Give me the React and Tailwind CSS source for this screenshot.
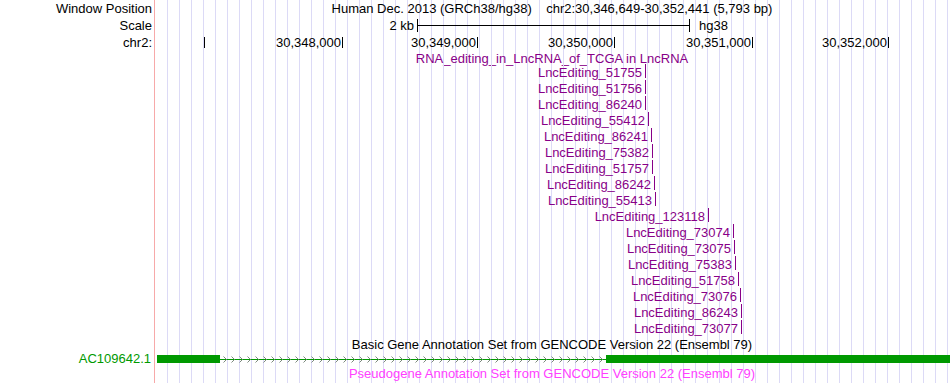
import React from 'react';

const GRID =
  'bg-[linear-gradient(to_right,transparent_11px,#dcdaf6_11px)] bg-[length:12px_100%]';

const rulerTicks = [
  { x: 204, label: '' },
  { x: 342, label: '30,348,000' },
  { x: 477, label: '30,349,000' },
  { x: 614, label: '30,350,000' },
  { x: 752, label: '30,351,000' },
  { x: 888, label: '30,352,000' },
];

const features = [
  ['LncEditing_51755', 645],
  ['LncEditing_51756', 645],
  ['LncEditing_86240', 645],
  ['LncEditing_55412', 648],
  ['LncEditing_86241', 651],
  ['LncEditing_75382', 652],
  ['LncEditing_51757', 652],
  ['LncEditing_86242', 654],
  ['LncEditing_55413', 655],
  ['LncEditing_123118', 708],
  ['LncEditing_73074', 733],
  ['LncEditing_73075', 734],
  ['LncEditing_75383', 735],
  ['LncEditing_51758', 738],
  ['LncEditing_73076', 740],
  ['LncEditing_86243', 741],
  ['LncEditing_73077', 741],
];

// left label cell + track cell with the guide lines behind it
function Row({ label, labelClass = '', h, children }) {
  return (
    <div className={`flex shrink-0 ${h}`}>
      <div
        className={`w-[155px] shrink-0 whitespace-nowrap border-r border-[#f7a9a9] bg-white pr-[2px] text-right ${labelClass}`}
      >
        {label}
      </div>
      <div className={`min-w-0 flex-1 border-l border-white ${GRID}`}>{children}</div>
    </div>
  );
}

function Intron() {
  const arrows = [];
  for (let x = 3; x < 384; x += 8) arrows.push(x);
  return (
    <svg width="386" height="8" className="shrink-0">
      <line x1="0" y1="4.5" x2="386" y2="4.5" stroke="#009900" strokeWidth="1" />
      {arrows.map((x) => (
        <polyline
          key={x}
          points={`${x + 0.5},1.5 ${x + 3.5},4.5 ${x + 0.5},7.5`}
          fill="none"
          stroke="#7c8a7c"
          strokeWidth="1"
        />
      ))}
    </svg>
  );
}

export default function App() {
  let prev = 155;

  return (
    <div className="flex h-[383px] w-[950px] flex-col overflow-hidden bg-white font-['Liberation_Sans',Arial,sans-serif] text-[13px] text-black">
      {/* Window position */}
      <Row label="Window Position" labelClass="leading-[17px]" h="h-[17px]">
        <div className="whitespace-pre pr-[2px] text-center leading-[17px]">
          {'Human Dec. 2013 (GRCh38/hg38)    chr2:30,346,649-30,352,441 (5,793 bp)'}
        </div>
      </Row>

      {/* Scale */}
      <Row label="Scale" labelClass="leading-[17px]" h="h-[17px]">
        <div className="flex h-full items-center leading-[17px]">
          <div className="w-[261px] shrink-0 pr-[3px] text-right">2 kb</div>
          <div className="flex h-[13px] w-[273px] shrink-0 items-center border-x border-black">
            <div className="h-px flex-1 bg-black" />
          </div>
          <div className="pl-[9px]">hg38</div>
        </div>
      </Row>

      {/* Base ruler */}
      <Row label="chr2:" labelClass="leading-[17px]" h="h-[17px]">
        <div className="flex h-full items-center leading-[17px]">
          {rulerTicks.map((t) => {
            const w = t.x - prev;
            prev = t.x;
            return (
              <div key={t.x} className="flex shrink-0 items-center justify-end" style={{ width: w }}>
                <span className="pr-px">{t.label}</span>
                <span className="-mt-px h-[11px] w-px bg-black" />
              </div>
            );
          })}
        </div>
      </Row>

      {/* Track title */}
      <Row label="" h="h-[14px]">
        <div className="whitespace-nowrap pr-[2px] text-center leading-[16px] text-[#880088]">
          RNA_editing_in_LncRNA_of_TCGA in LncRNA
        </div>
      </Row>

      {/* Features */}
      {features.map(([name, x]) => (
        <Row key={name} label="" h="h-[16px]">
          <div className="flex h-full text-[#880088]" style={{ width: x - 155 }}>
            <span className="flex-1 whitespace-nowrap pr-[3px] text-right leading-[16px]">{name}</span>
            <span className="-mt-px h-[14px] w-px shrink-0 bg-[#880088]" />
          </div>
        </Row>
      ))}

      {/* GENCODE */}
      <Row label="" h="h-[15px]">
        <div className="whitespace-nowrap pr-[2px] text-center leading-[16px]">
          Basic Gene Annotation Set from GENCODE Version 22 (Ensembl 79)
        </div>
      </Row>

      <Row label="AC109642.1" labelClass="pr-[3px] leading-[14px] text-[#009900]" h="h-[14px]">
        <div className="flex h-full items-center pl-px">
          <div className="h-[8px] w-[63px] shrink-0 bg-[#009900]" />
          <Intron />
          <div className="h-[8px] flex-1 bg-[#009900]" />
        </div>
      </Row>

      <div className="flex min-h-0 flex-1">
        <div className="w-[155px] shrink-0 border-r border-[#f7a9a9] bg-white" />
        <div className={`min-w-0 flex-1 border-l border-white ${GRID}`}>
          <div className="whitespace-nowrap pr-[2px] text-center leading-[16px] text-[#ff40ff]">
            Pseudogene Annotation Set from GENCODE Version 22 (Ensembl 79)
          </div>
        </div>
      </div>
    </div>
  );
}
